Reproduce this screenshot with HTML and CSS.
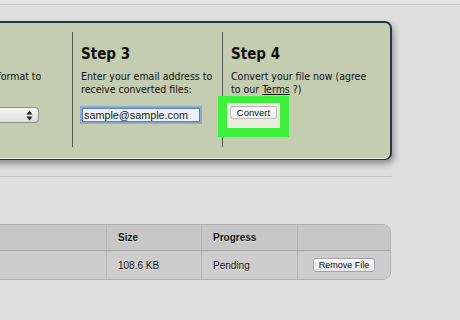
FILE: index.html
```html
<!DOCTYPE html>
<html>
<head>
<meta charset="utf-8">
<link rel="stylesheet" href="styles.css">
</head>
<body>
<div class="page">
  <div class="topstrip"></div>
  <div class="panel-area">
    <div class="panel">
      <div class="col col-step2">
        <h2 class="step-title">Step 2</h2>
        <p class="step-text">Choose the format to convert to:</p>
        <div class="select">
          <span class="select-value"></span>
          <svg class="select-arrows" width="7" height="11" viewBox="0 0 7 11"><path d="M3.5 0.5 L6.5 4.5 L0.5 4.5 Z M3.5 10.5 L6.5 6.5 L0.5 6.5 Z" fill="#222"/></svg>
        </div>
      </div>
      <div class="col col-step3">
        <h2 class="step-title">Step 3</h2>
        <p class="step-text">Enter your email address to receive converted files:</p>
        <div class="email-input">sample@sample.com</div>
      </div>
      <div class="col col-step4">
        <h2 class="step-title">Step 4</h2>
        <p class="step-text step4-text">Convert your file now (agree to our <span class="terms">Terms</span> ?)</p>
        <div class="highlight">
          <div class="highlight-inner">
            <span class="convert-btn">Convert</span>
          </div>
        </div>
      </div>
    </div>
  </div>
  <div class="separator"></div>
  <div class="files">
    <div class="files-row files-head">
      <div class="cell cell-name"></div>
      <div class="cell cell-size">Size</div>
      <div class="cell cell-progress">Progress</div>
      <div class="cell cell-action"></div>
    </div>
    <div class="files-row files-body">
      <div class="cell cell-name"></div>
      <div class="cell cell-size">108.6 KB</div>
      <div class="cell cell-progress">Pending</div>
      <div class="cell cell-action"><span class="remove-btn">Remove File</span></div>
    </div>
  </div>
</div>
</body>
</html>
```

FILE: styles.css
```css
html, body {
  margin: 0;
  padding: 0;
}
body {
  background: #dfdfdf;
  width: 460px;
  height: 320px;
  overflow: hidden;
}
.page {
  width: 460px;
  height: 320px;
  overflow: hidden;
}
.topstrip {
  height: 4px;
  background: #e6e6e6;
  border-bottom: 1px solid #c9c9c9;
}
.panel-area {
  padding-top: 16px;
}
.panel {
  box-sizing: border-box;
  margin-left: -80px;
  width: 472px;
  height: 139px;
  background: #c4cdaf;
  border: 2px solid #2b3341;
  border-bottom-width: 1px;
  border-radius: 0 7px 7px 0;
  box-shadow: inset 0 -1px 0 #e4ead7, 2px 4px 6px rgba(0, 0, 0, 0.35);
  display: flex;
  font-family: "DejaVu Sans Condensed", "DejaVu Sans", sans-serif;
  color: #111;
}
.col {
  box-sizing: border-box;
  margin: 9px 0 12px;
  padding: 13px 8px 0;
}
.col-step2 {
  width: 151px;
  padding-left: 19px;
  border-right: 1px solid #555a52;
}
.col-step3 {
  width: 150px;
  border-right: 1px solid #555a52;
}
.col-step4 {
  flex: 1;
  padding-right: 20px;
}
.step-title {
  margin: 0;
  font-size: 15px;
  line-height: 18px;
  font-weight: bold;
}
.step-text {
  margin: 7px 0 0;
  font-size: 10.5px;
  line-height: 13px;
}
.select {
  box-sizing: border-box;
  margin-top: 11px;
  width: 98px;
  height: 16px;
  border: 1px solid #8e8e8e;
  border-radius: 4px;
  background: linear-gradient(#f6f6f6, #dcdcdc);
  display: flex;
  align-items: center;
  justify-content: space-between;
  padding: 0 5px 0 6px;
}
.email-input {
  box-sizing: border-box;
  margin-top: 10px;
  margin-left: -1px;
  width: 122px;
  height: 18px;
  border: 2px solid #86a9d6;
  background: #eef2f6;
  box-shadow: inset 0 0 0 1px #5d7ea8;
  font-family: "Liberation Sans", sans-serif;
  font-size: 10.8px;
  line-height: 14px;
  padding-left: 2px;
  color: #1a1a1a;
}
.terms {
  text-decoration: underline;
}
.highlight {
  position: relative;
  margin-left: -13px;
  width: 71px;
  height: 41px;
  box-sizing: border-box;
  padding: 7px 9px 9px;
  background: #3ef03b;
}
.highlight-inner {
  box-sizing: border-box;
  height: 25px;
  background: #e9eedc;
  padding: 3px 3px 0;
}
.convert-btn {
  display: block;
  box-sizing: border-box;
  width: 47px;
  height: 13px;
  border: 1px solid #b9b9b9;
  border-top-color: #c9a2d8;
  border-radius: 3px;
  background: linear-gradient(#ffffff, #f0f0f0);
  font-family: "Liberation Sans", sans-serif;
  font-size: 9.5px;
  line-height: 11px;
  text-align: center;
  color: #111;
}
.separator {
  margin-top: 16px;
  width: 392px;
  height: 1px;
  background: #c6c6c6;
}
.files {
  margin-top: 47px;
  margin-left: -100px;
  width: 491px;
  box-sizing: border-box;
  border: 1px solid #b0b0b0;
  border-radius: 8px;
  overflow: hidden;
  font-family: "Liberation Sans", Arial, sans-serif;
  font-size: 10px;
  color: #111;
  text-shadow: 0 1px 0 rgba(255, 255, 255, 0.55);
}
.files-row {
  display: grid;
  grid-template-columns: 205px 95px 96px 1fr;
}
.files-head {
  height: 25px;
  background: #c7c7c7;
  border-bottom: 1px solid #a9a9a9;
  font-weight: bold;
}
.files-body {
  height: 28px;
  background: #cdcdcd;
}
.cell {
  display: flex;
  align-items: center;
  padding-left: 11px;
  border-left: 1px solid #b5b5b5;
}
.cell-name {
  border-left: none;
}
.cell-action {
  justify-content: center;
  padding-left: 0;
}
.remove-btn {
  display: block;
  box-sizing: border-box;
  width: 62px;
  height: 14px;
  border: 1px solid #a3a3a3;
  border-radius: 3px;
  background: linear-gradient(#fafafa, #e6e6e6);
  font-size: 9px;
  line-height: 12px;
  text-align: center;
  text-shadow: none;
}
```
